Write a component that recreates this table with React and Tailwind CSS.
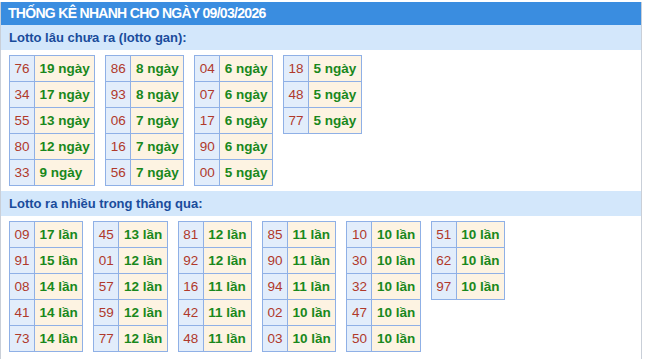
import React from 'react';

const ganTables = [
    [['76', 19], ['34', 17], ['55', 13], ['80', 12], ['33', 9]],
    [['86', 8], ['93', 8], ['06', 7], ['16', 7], ['56', 7]],
    [['04', 6], ['07', 6], ['17', 6], ['90', 6], ['00', 5]],
    [['18', 5], ['48', 5], ['77', 5]],
];

const nhieuTables = [
    [['09', 17], ['91', 15], ['08', 14], ['41', 14], ['73', 14]],
    [['45', 13], ['01', 12], ['57', 12], ['59', 12], ['77', 12]],
    [['81', 12], ['92', 12], ['16', 11], ['42', 11], ['48', 11]],
    [['85', 11], ['90', 11], ['94', 11], ['02', 10], ['03', 10]],
    [['10', 10], ['30', 10], ['32', 10], ['47', 10], ['50', 10]],
    [['51', 10], ['62', 10], ['97', 10]],
];

const StatTable = ({ rows, unit }) => (
    <table className="border-collapse text-[13.5px] leading-[25px]">
        <tbody>
            {rows.map(([num, count]) => (
                <tr key={num}>
                    <td className="border border-[#8fb0e6] bg-[#e2edfb] px-[4.5px] py-0 text-[#b0392b]">{num}</td>
                    <td className="border border-[#8fb0e6] bg-[#fdf3e2] px-[4.5px] py-0 font-bold text-[#19881c]">
                        {count} {unit}
                    </td>
                </tr>
            ))}
        </tbody>
    </table>
);

const SectionTitle = ({ children }) => (
    <div className="h-[25px] bg-[#d3e7fb] px-[8px] text-[13px] font-bold leading-[25px] text-[#1a4c9c]">
        {children}
    </div>
);

export default function App() {
    return (
        <div className="bg-white pt-[2px]" style={{ fontFamily: '"Liberation Sans", Arial, sans-serif' }}>
            <div className="w-[642px] border-x border-[#c9cfd8] pb-[8px]">
                <div className="h-[23px] bg-[#3a8de0] px-[7px] text-[14px] font-bold leading-[23px] tracking-[-0.7px] text-white">
                    THỐNG KÊ NHANH CHO NGÀY 09/03/2026
                </div>
                <SectionTitle>Lotto lâu chưa ra (lotto gan):</SectionTitle>
                <div className="flex items-start gap-[10px] px-[8px] pt-[5px] pb-[5px]">
                    {ganTables.map((rows, i) => (
                        <StatTable key={i} rows={rows} unit="ngày" />
                    ))}
                </div>
                <SectionTitle>Lotto ra nhiều trong tháng qua:</SectionTitle>
                <div className="flex items-start gap-[10px] px-[8px] pt-[5px]">
                    {nhieuTables.map((rows, i) => (
                        <StatTable key={i} rows={rows} unit="lần" />
                    ))}
                </div>
            </div>
        </div>
    );
}
